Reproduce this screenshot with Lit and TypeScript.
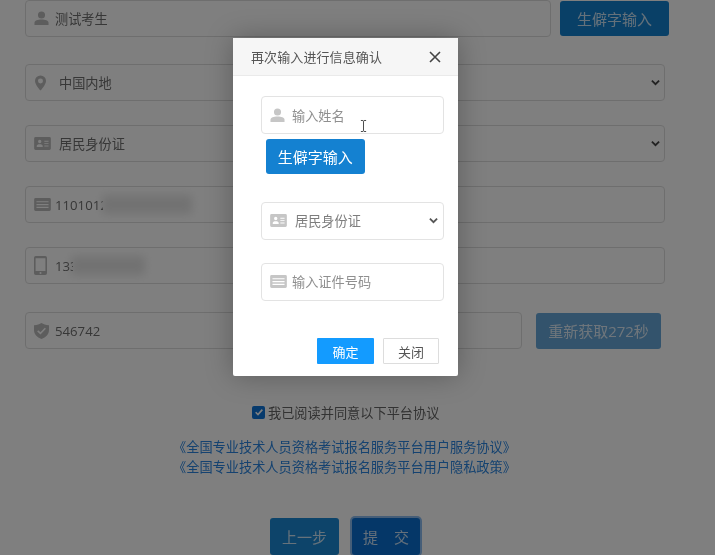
import { LitElement, html, css, svg } from "lit";
import { customElement } from "lit/decorators.js";

const person = svg`<svg viewBox="0 0 16 16" width="15" height="15"><circle cx="8" cy="4.2" r="3.8" fill="currentColor"/><path d="M.5 15v-2.500C.5 10.200 4 9 8 9s7.500 1.200 7.500 3.500V15z" fill="currentColor"/></svg>`;
const pin = svg`<svg viewBox="0 0 14 18" width="13" height="16"><path fill-rule="evenodd" d="M7 .5a6.200 6.200 0 0 0-6.200 6.200C.8 10.900 7 17.500 7 17.500s6.200-6.600 6.200-10.800A6.200 6.200 0 0 0 7 .5zm0 3.400a2.800 2.800 0 1 1 0 5.600 2.800 2.800 0 0 1 0-5.600z" fill="currentColor"/></svg>`;
const idcard = svg`<svg viewBox="0 0 18 14" width="17" height="13"><path fill-rule="evenodd" d="M1.500 0h15A1.500 1.500 0 0 1 18 1.500v11a1.500 1.500 0 0 1-1.500 1.500h-15A1.500 1.500 0 0 1 0 12.500v-11A1.500 1.500 0 0 1 1.500 0zM6 3a1.800 1.800 0 1 0 0 3.600A1.800 1.800 0 0 0 6 3zM2.800 10.800h6.400V9.600C9.200 8.500 8 7.800 6 7.800s-3.200.7-3.200 1.800zM11 4v1h4.500V4zm0 2.600v1h4.500v-1zm0 2.600v1h4.500v-1z" fill="currentColor"/></svg>`;
const card = svg`<svg viewBox="0 0 18 14" width="17" height="13"><path fill-rule="evenodd" d="M1.500 0h15A1.500 1.500 0 0 1 18 1.500v11a1.500 1.500 0 0 1-1.500 1.500h-15A1.500 1.500 0 0 1 0 12.500v-11A1.500 1.500 0 0 1 1.500 0zM2.500 3.500v1.200h13V3.500zm0 3v1.200h13V6.500zm0 3v1.200h13V9.500z" fill="currentColor"/></svg>`;
const phone = svg`<svg viewBox="0 0 13 19" width="13" height="19"><path fill-rule="evenodd" d="M1.800 0h9.400A1.800 1.800 0 0 1 13 1.800v15.400a1.800 1.800 0 0 1-1.800 1.800H1.800A1.800 1.800 0 0 1 0 17.200V1.800A1.800 1.800 0 0 1 1.800 0zM1.600 2.200v12.800h9.800V2.200zM6.500 15.900a1 1 0 1 0 0 2 1 1 0 0 0 0-2z" fill="currentColor"/></svg>`;
const shield = svg`<svg viewBox="0 0 16 17" width="15" height="16"><path fill-rule="evenodd" d="M8 0c2 1.300 4.500 2.200 8 2.300v5.200C16 12 12.800 15.400 8 17 3.200 15.400 0 12 0 7.500V2.300C3.500 2.200 6 1.300 8 0zM4.500 7.700 3.400 8.900l3.500 3.300 5.800-6-1.200-1.100-4.600 4.800z" fill="currentColor"/></svg>`;
const chevron = svg`<svg viewBox="0 0 10 7" width="9" height="7"><path d="M1 1.300 5 5.300 9 1.300" fill="none" stroke="currentColor" stroke-width="2"/></svg>`;

@customElement("app-root")
export class AppRoot extends LitElement {
  static styles = css`
    :host {
      display: block;
      width: 715px;
      height: 555px;
      font-family: "Open Sans", "Noto Sans CJK SC", sans-serif;
    }
    .page {
      position: relative;
      width: 715px;
      height: 555px;
      overflow: hidden;
      background: #fff;
      color: #666;
      font-size: 13.2px;
      box-sizing: border-box;
      padding: 0 50px 0 25px;
      filter: blur(0.4px);
    }
    .field {
      box-sizing: border-box;
      height: 37px;
      border: 1px solid #ddd;
      border-radius: 4px;
      background: #fff;
      display: flex;
      align-items: center;
      padding-left: 8px;
      gap: 4px;
      color: #6e6e6e;
    }
    .ic { display: flex; color: #bbb; width: 17px; justify-content: flex-start; flex: none; }
    .row { display: flex; align-items: center; }
    .row .field { flex: none; }
    .first { margin-bottom: 27px; width: 644px; }
    .first .field { width: 526px; margin-right: 9px; }
    .first .btn { width: 109px; height: 35px; }
    .stack { display: flex; flex-direction: column; gap: 24px; width: 640px; }
    .sel { gap: 8px; padding-right: 4px; }
    .sel .chev { margin-left: auto; display: flex; color: #444; }
    .code { margin-top: 28px; width: 636px; }
    .code .field { width: 497px; margin-right: 14px; }
    .btn {
      border: 0;
      border-radius: 3px;
      background: #1380cf;
      color: #fff;
      font: inherit;
      font-size: 15px;
      padding: 0;
      white-space: nowrap;
    }
    .dim { color: rgba(255, 255, 255, 0.78); }
    .code .btn { width: 125px; height: 36px; background: #66a6d8; }
    .entry { position: relative; display: flex; }
    .cut { display: block; width: 3px; overflow: hidden; }
    .mask {
      position: absolute;
      top: -1px;
      height: 19px;
      background: #bdbdbd;
      filter: blur(4px);
      opacity: 0.4;
    }
    .m-id { left: 47px; width: 90px; }
    .m-tel { left: 16px; width: 74px; }
    .agree {
      margin: 54px 0 0 227px;
      display: flex;
      align-items: center;
      gap: 3px;
      height: 18px;
    }
    .check {
      width: 13px;
      height: 13px;
      border-radius: 2px;
      background: #0f74d8;
      display: flex;
      align-items: center;
      justify-content: center;
    }
    .links {
      margin: 16px 0 0 -25px;
      width: 689px;
      text-align: center;
      color: #2a85e0;
      line-height: 20px;
    }
    .actions {
      margin: 41px 0 0 245px;
      display: flex;
      gap: 13px;
    }
    .actions .btn { height: 37px; }
    .prev { width: 69px; }
    .actions .prev { background: #1a88d4; }
    .actions .next {
      width: 68px;
      background: #0a6fd0;
      box-shadow: 0 0 0 2px #8dbdf0;
      letter-spacing: 16px;
      padding-left: 11px;
      text-align: left;
    }

    .overlay {
      position: absolute;
      inset: 0;
      background: rgba(0, 0, 0, 0.5);
      padding: 38px 0 0 233px;
    }
    .modal {
      position: relative;
      width: 225px;
      height: 338px;
      background: #fff;
      border-radius: 2px;
      box-shadow: 0 0 28px rgba(0, 0, 0, 0.28);
      display: flex;
      flex-direction: column;
    }
    .head {
      flex: none;
      height: 38px;
      box-sizing: border-box;
      background: #f6f6f6;
      border-bottom: 1px solid #eaeaea;
      display: flex;
      align-items: center;
      justify-content: space-between;
      padding: 0 17px 0 18px;
      font-size: 13px;
      letter-spacing: 0.1px;
      color: #555;
    }
    .close { display: flex; color: #444; }
    .body { padding: 20px 14px 0 28px; display: flex; flex-direction: column; }
    .mfield {
      box-sizing: border-box;
      height: 37.5px;
      border: 1px solid #e3e3e3;
      border-radius: 4px;
      display: flex;
      align-items: center;
      padding-left: 8px;
      gap: 5px;
      color: #8f8f8f;
    }
    .name { padding-top: 1px; }
    .mfield .ic { color: #c6c6c6; }
    .mbtn {
      align-self: flex-start;
      margin: 5.5px 0 0 4.500px;
      width: 99.500px;
      height: 35px;
      background: #1481d1;
    }
    .sel2 { margin-top: 28px; gap: 8px; padding-right: 5px; color: #7d7d7d; }
    .sel2 .chev { margin-left: auto; display: flex; color: #555; }
    .num { margin-top: 23.500px; }
    .foot {
      margin-top: auto;
      padding: 0 19px 12px 0;
      display: flex;
      justify-content: flex-end;
      gap: 9px;
    }
    .ok, .no {
      font: inherit;
      font-size: 13px;
      height: 26px;
      width: 56px;
      padding: 0;
      border-radius: 1px;
    }
    .ok { background: #139bff; color: #fff; border: 0; width: 57px; }
    .no { background: #fff; color: #555; border: 1px solid #ddd; }
    .cursor { position: absolute; left: 126.500px; top: 81px; display: flex; }
  `;

  render() {
    return html`
      <div class="page">
        <div class="row first">
          <div class="field"><span class="ic">${person}</span>测试考生</div>
          <button class="btn dim">生僻字输入</button>
        </div>
        <div class="stack">
          <div class="field sel"><span class="ic">${pin}</span>中国内地<span class="chev">${chevron}</span></div>
          <div class="field sel"><span class="ic">${idcard}</span>居民身份证<span class="chev">${chevron}</span></div>
          <div class="field"><span class="ic">${card}</span><span class="entry">110101<span class="cut">2</span><span class="mask m-id"></span></span></div>
          <div class="field"><span class="ic">${phone}</span><span class="entry">13<span class="cut">3</span><span class="mask m-tel"></span></span></div>
        </div>
        <div class="row code">
          <div class="field"><span class="ic">${shield}</span>546742</div>
          <button class="btn dim">重新获取272秒</button>
        </div>
        <div class="agree">
          <span class="check"><svg viewBox="0 0 12 12" width="10" height="10"><path d="M2 6.300 4.800 9 10 3.200" fill="none" stroke="#fff" stroke-width="2"/></svg></span>
          我已阅读并同意以下平台协议
        </div>
        <div class="links">
          《全国专业技术人员资格考试报名服务平台用户服务协议》<br />
          《全国专业技术人员资格考试报名服务平台用户隐私政策》
        </div>
        <div class="actions">
          <button class="btn prev dim">上一步</button>
          <button class="btn next dim">提交</button>
        </div>

        <div class="overlay">
          <div class="modal">
            <div class="head">
              <span>再次输入进行信息确认</span>
              <span class="close"><svg viewBox="0 0 12 12" width="12" height="12"><path d="M1 1l10 10M11 1 1 11" stroke="currentColor" stroke-width="1.600" fill="none"/></svg></span>
            </div>
            <div class="body">
              <div class="mfield name"><span class="ic">${person}</span>输入姓名</div>
              <button class="btn mbtn">生僻字输入</button>
              <div class="mfield sel2"><span class="ic">${idcard}</span>居民身份证<span class="chev">${chevron}</span></div>
              <div class="mfield num"><span class="ic">${card}</span>输入证件号码</div>
            </div>
            <div class="foot">
              <button class="ok">确定</button>
              <button class="no">关闭</button>
            </div>
            <span class="cursor"><svg viewBox="0 0 8 14" width="7" height="14"><path d="M1 .7h2.300L4 1.500 4.700.7H7M4 1.500v11M1 13.300h2.300l.7-.8.7.8H7" fill="none" stroke="#333" stroke-width="1"/></svg></span>
          </div>
        </div>
      </div>
    `;
  }
}
